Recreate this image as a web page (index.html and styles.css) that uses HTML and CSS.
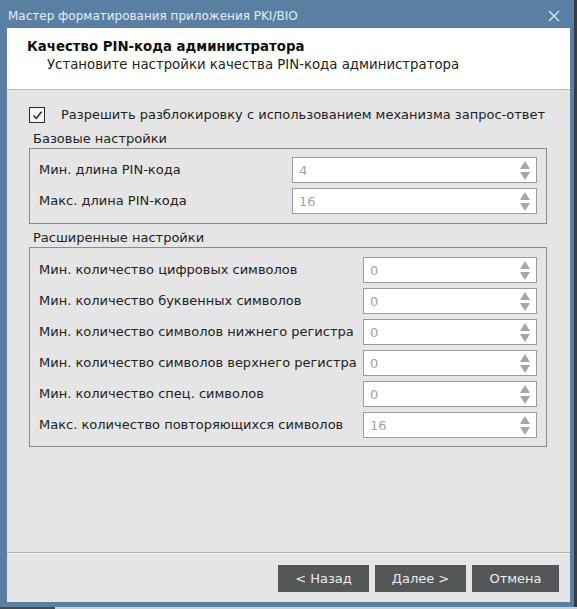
FILE: index.html
```html
<!DOCTYPE html>
<html lang="ru">
<head>
<meta charset="utf-8">
<title>Мастер форматирования приложения PKI/BIO</title>
<link rel="stylesheet" href="styles.css">
</head>
<body>
<div class="window">
  <div class="titlebar">
    <span class="title">Мастер форматирования приложения PKI/BIO</span>
    <svg class="close" width="12" height="12" viewBox="0 0 12 12"><path d="M1 1L11 11M11 1L1 11" stroke="#dfe8f0" stroke-width="1.3" fill="none"/></svg>
  </div>
  <div class="client">
    <header class="page-head">
      <h1 class="page-title">Качество PIN-кода администратора</h1>
      <p class="page-sub">Установите настройки качества PIN-кода администратора</p>
    </header>
    <main class="page-body">
      <label class="check-row">
        <span class="checkbox"><svg width="13" height="13" viewBox="0 0 13 13"><path d="M2.5 6.5L5.3 9.5L10.5 2.8" stroke="#1e1e1e" stroke-width="1.4" fill="none"/></svg></span>
        <span>Разрешить разблокировку с использованием механизма запрос-ответ</span>
      </label>

      <div class="group-title">Базовые настройки</div>
      <div class="group group-basic">
        <span class="lbl">Мин. длина PIN-кода</span>
        <div class="spin"><span class="val">4</span><span class="arrows"><i class="up"></i><i class="down"></i></span></div>
        <span class="lbl">Макс. длина PIN-кода</span>
        <div class="spin"><span class="val">16</span><span class="arrows"><i class="up"></i><i class="down"></i></span></div>
      </div>

      <div class="group-title">Расширенные настройки</div>
      <div class="group group-ext">
        <span class="lbl">Мин. количество цифровых символов</span>
        <div class="spin"><span class="val">0</span><span class="arrows"><i class="up"></i><i class="down"></i></span></div>
        <span class="lbl">Мин. количество буквенных символов</span>
        <div class="spin"><span class="val">0</span><span class="arrows"><i class="up"></i><i class="down"></i></span></div>
        <span class="lbl">Мин. количество символов нижнего регистра</span>
        <div class="spin"><span class="val">0</span><span class="arrows"><i class="up"></i><i class="down"></i></span></div>
        <span class="lbl">Мин. количество символов верхнего регистра</span>
        <div class="spin"><span class="val">0</span><span class="arrows"><i class="up"></i><i class="down"></i></span></div>
        <span class="lbl">Мин. количество спец. символов</span>
        <div class="spin"><span class="val">0</span><span class="arrows"><i class="up"></i><i class="down"></i></span></div>
        <span class="lbl">Макс. количество повторяющихся символов</span>
        <div class="spin"><span class="val">16</span><span class="arrows"><i class="up"></i><i class="down"></i></span></div>
      </div>
    </main>
    <footer class="page-foot">
      <button class="btn btn-back">&lt; Назад</button>
      <button class="btn btn-next">Далее &gt;</button>
      <button class="btn btn-cancel">Отмена</button>
    </footer>
  </div>
</div>
</body>
</html>
```

FILE: styles.css
```css
html, body {
  margin: 0;
  padding: 0;
}

body {
  width: 577px;
  height: 609px;
  background: linear-gradient(to right, #4a4a4a 0 55px, #cfd2d4 55px);
  font-family: "DejaVu Sans", sans-serif;
  font-size: 13px;
  color: #1e1e1e;
  overflow: hidden;
}

.window {
  width: 574px;
  height: 607px;
  box-sizing: border-box;
  background: #5980a3;
  padding: 0 4px 5px 7px;
  display: flex;
  flex-direction: column;
  box-shadow: 3px 0 0 #3a3d40;
}

.titlebar {
  height: 28px;
  flex: none;
  display: flex;
  align-items: center;
  justify-content: space-between;
  padding-left: 1px;
  padding-right: 10px;
}

.title {
  color: #e4ecf3;
  font-size: 12px;
  padding-top: 3px;
}

.close {
  margin-top: 3px;
}

.client {
  flex: 1;
  display: flex;
  flex-direction: column;
  background: #e5e5e6;
}

.page-head {
  height: 62px;
  flex: none;
  box-sizing: border-box;
  background: #ffffff;
  border-bottom: 1px solid #b9b9b9;
  padding: 10px 0 0 20px;
}

.page-title {
  margin: 0;
  font-size: 13.3px;
  font-weight: bold;
  line-height: 17px;
  color: #111;
}

.page-sub {
  margin: 0;
  padding-left: 20px;
  font-size: 13.3px;
  line-height: 19px;
  color: #222;
}

.page-body {
  flex: 1;
  padding: 17px 23px 0 22px;
}

.check-row {
  display: flex;
  align-items: center;
  gap: 16px;
  height: 16px;
  line-height: 16px;
}

.checkbox {
  width: 14px;
  height: 14px;
  border: 1px solid #2a2a2a;
  background: #f4f4f4;
  display: flex;
  align-items: center;
  justify-content: center;
}

.group-title {
  margin: 8px 0 0 4px;
  height: 16px;
  line-height: 16px;
  color: #222;
}

.group + .group-title {
  margin-top: 6px;
}

.group-title + .group {
  margin-top: 1px;
}

.group {
  border: 1px solid #8c8c8c;
  display: grid;
  row-gap: 5px;
  align-items: center;
  padding: 8px 9px 9px 9px;
}

.group-basic {
  grid-template-columns: 253px 1fr;
}

.group-ext {
  grid-template-columns: 324px 1fr;
  padding-top: 9px;
  padding-bottom: 8px;
}

.lbl {
  line-height: 16px;
  color: #222;
}

.spin {
  height: 26px;
  box-sizing: border-box;
  border: 1px solid #9b9b9b;
  background: #ffffff;
  display: flex;
  align-items: center;
  justify-content: space-between;
  padding: 0 6px 0 6px;
}

.val {
  color: #a3a3a3;
}

.arrows {
  display: flex;
  flex-direction: column;
  gap: 3px;
}

.arrows i {
  width: 0;
  height: 0;
  border-left: 5px solid transparent;
  border-right: 5px solid transparent;
}

.arrows .up {
  border-bottom: 8px solid #a6a6a6;
}

.arrows .down {
  border-top: 8px solid #a6a6a6;
}

.page-foot {
  flex: none;
  height: 50px;
  box-sizing: border-box;
  border-top: 1px solid #b4b4b4;
  box-shadow: inset 0 1px 0 #f2f2f2;
  display: flex;
  justify-content: flex-end;
  align-items: flex-start;
  gap: 6px;
  padding: 12px 11px 0 0;
}

.btn {
  height: 27px;
  border: none;
  background: #545758;
  color: #ececec;
  font-family: "DejaVu Sans", sans-serif;
  font-size: 13px;
  padding: 0;
}

.btn-back { width: 91px; }
.btn-next { width: 91px; }
.btn-cancel { width: 87px; }
```
